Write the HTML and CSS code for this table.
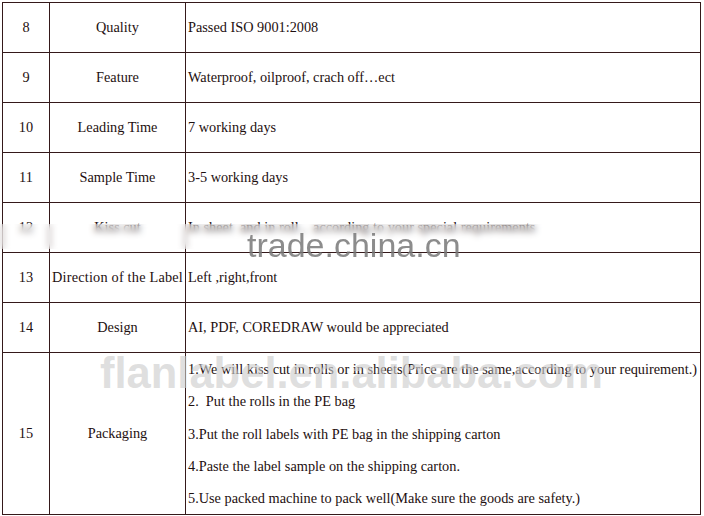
FILE: index.html
```html
<!DOCTYPE html>
<html>
<head>
<meta charset="utf-8">
<link rel="stylesheet" href="styles.css">
</head>
<body>
<div class="page">
  <table class="spec">
    <colgroup>
      <col class="c-no">
      <col class="c-name">
      <col class="c-val">
    </colgroup>
    <tr><td class="no">8</td><td class="name">Quality</td><td class="val">Passed ISO 9001:2008</td></tr>
    <tr><td class="no">9</td><td class="name">Feature</td><td class="val">Waterproof, oilproof, crach off…ect</td></tr>
    <tr><td class="no">10</td><td class="name">Leading Time</td><td class="val">7 working days</td></tr>
    <tr><td class="no">11</td><td class="name">Sample Time</td><td class="val">3-5 working days</td></tr>
    <tr><td class="no">12</td><td class="name">Kiss cut</td><td class="val">In sheet&nbsp; and in roll ,&nbsp; according to your special requirements</td></tr>
    <tr><td class="no">13</td><td class="name wide">Direction of the Label</td><td class="val">Left ,right,front</td></tr>
    <tr><td class="no">14</td><td class="name">Design</td><td class="val">AI, PDF, COREDRAW would be appreciated</td></tr>
    <tr class="tall">
      <td class="no">15</td><td class="name">Packaging</td>
      <td class="val list">
        <div class="line">1.We will kiss cut in rolls or in sheets(Price are the same,according to your requirement.)</div>
        <div class="line">2.&nbsp; Put the rolls in the PE bag</div>
        <div class="line">3.Put the roll labels with PE bag in the shipping carton</div>
        <div class="line">4.Paste the label sample on the shipping carton.</div>
        <div class="line">5.Use packed machine to pack well(Make sure the goods are safety.)</div>
      </td>
    </tr>
  </table>
  <div class="blur-band"></div>
  <div class="wm-trade">trade.china.cn</div>
  <div class="wm-site">flanlabel.en.alibaba.com</div>
</div>
</body>
</html>
```
FILE: styles.css
```css
html, body {
  margin: 0;
  padding: 0;
  background: #ffffff;
}
.page {
  position: relative;
  width: 704px;
  height: 516px;
  overflow: hidden;
}
.spec {
  border-collapse: collapse;
  table-layout: fixed;
  margin: 2px 0 0 2px;
  width: 699px;
  font-family: "Liberation Serif", "Times New Roman", serif;
  font-size: 14.3px;
  color: #1e0f0f;
}
.c-no { width: 47px; }
.c-name { width: 136px; }
.spec td {
  border: 1px solid #35191a;
  height: 49px;
  padding: 0;
  vertical-align: middle;
  white-space: nowrap;
}
.spec .no, .spec .name {
  text-align: center;
}
.spec .name.wide {
  letter-spacing: 0.2px;
}
.spec .val {
  text-align: left;
  padding-left: 2px;
}
.spec .tall td {
  height: 161px;
}
.list .line {
  line-height: 32.3px;
}
.blur-band {
  position: absolute;
  left: 0;
  top: 224px;
  width: 620px;
  height: 25px;
  backdrop-filter: blur(3px);
  -webkit-backdrop-filter: blur(3px);
  background: rgba(255, 255, 255, 0.2);
}
.wm-trade {
  position: absolute;
  left: 247px;
  top: 225px;
  font-family: "Liberation Sans", Arial, sans-serif;
  font-size: 34px;
  line-height: 40px;
  color: rgba(120, 120, 120, 0.85);
}
.wm-site {
  position: absolute;
  left: 100px;
  top: 350px;
  font-family: "Liberation Sans", Arial, sans-serif;
  font-weight: bold;
  font-size: 43.5px;
  line-height: 46px;
  color: rgba(205, 205, 205, 0.65);
}
```
